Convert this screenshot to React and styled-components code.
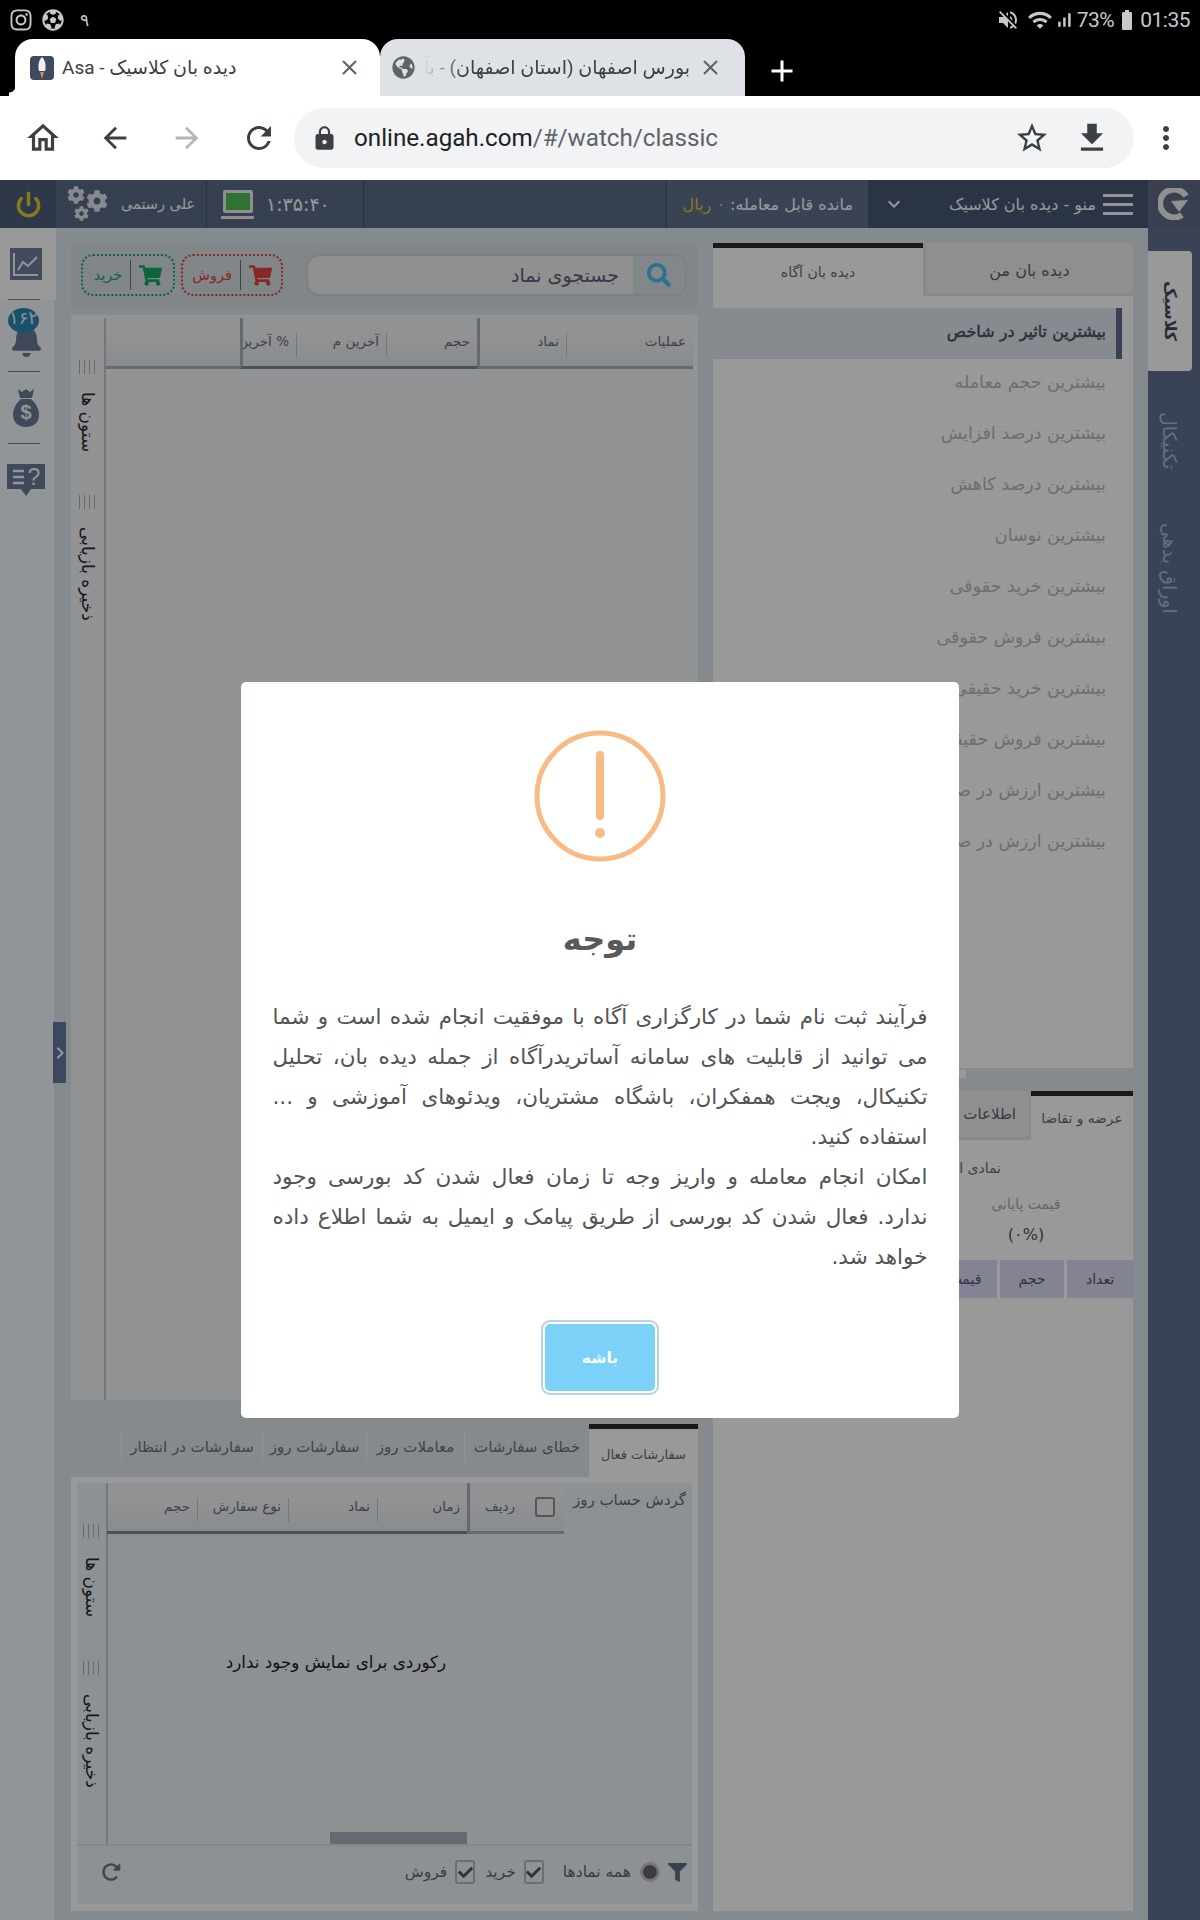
import React from 'react';
import styled, { createGlobalStyle } from 'styled-components';
import { FaInstagram, FaFutbol, FaGlobeAmericas, FaShoppingCart, FaSearch, FaCog, FaFilter, FaBell, FaCheck } from 'react-icons/fa';
import { FaRotateRight } from 'react-icons/fa6';
import {
  MdVolumeOff, MdWifi, MdSignalCellularAlt, MdBatteryFull, MdOutlineHome, MdArrowBack, MdArrowForward,
  MdRefresh, MdLock, MdStarBorder, MdFileDownload, MdMoreVert, MdAdd, MdClose, MdKeyboardArrowDown, MdChevronRight,
} from 'react-icons/md';
import { Power } from 'lucide-react';

const Global = createGlobalStyle`
  html, body { margin: 0; padding: 0; background: #000; overflow: hidden; }
  * { box-sizing: border-box; }
  body { font-family: "DejaVu Sans", sans-serif; }
`;

const Page = styled.div`
  width: 1200px;
  height: 1920px;
  display: flex;
  flex-direction: column;
`;

/* ---------- android status bar ---------- */
const StatusBar = styled.div`
  height: 39px;
  background: #000;
  color: #c8c8c8;
  display: flex;
  align-items: center;
  padding: 0 10px 0 9px;
  font-family: Roboto, "DejaVu Sans", sans-serif;
  font-size: 21px;
`;
const StatusGroup = styled.div`
  display: flex;
  align-items: center;
  gap: ${p => p.$gap || 4}px;
  margin-left: ${p => (p.$end ? 'auto' : 0)};
`;
const Narrow = styled.span`
  letter-spacing: -0.5px;
  margin-left: ${p => p.$ml || 0}px;
`;
const Notif = styled.span`
  font-size: 17px;
  margin-left: 7px;
`;
const WifiIcon = styled(MdWifi)`
  margin-left: 6px;
`;

/* ---------- browser tabs ---------- */
const TabStrip = styled.div`
  height: 57px;
  background: #000;
  display: flex;
  align-items: stretch;
  padding-left: 15px;
`;
const BrowserTab = styled.div`
  position: relative;
  width: ${p => p.$w}px;
  background: ${p => (p.$active ? '#fff' : '#dee1e6')};
  border-radius: 18px 18px 0 0;
  display: flex;
  align-items: center;
  padding: 0 ${p => (p.$active ? 18 : 22)}px 0 ${p => p.$pad}px;
  gap: 8px;
  color: #3c4043;
  font-family: Roboto, "DejaVu Sans", sans-serif;
  font-size: 19px;
  &::before {
    content: '';
    position: absolute;
    left: -6px;
    bottom: 0;
    width: 6px;
    height: 10px;
    display: ${p => (p.$active ? 'block' : 'none')};
    background: radial-gradient(circle at 0 0, transparent 6px, #fff 7px);
  }
`;
const Favicon = styled.div`
  width: 24px;
  height: 24px;
  border-radius: 4px;
  background: #3d4a5f;
  flex: none;
  display: flex;
  align-items: center;
  justify-content: center;
`;
const TabTitle = styled.div`
  flex: 1;
  overflow: hidden;
  white-space: nowrap;
  text-align: left;
  ${p => p.$fade && 'mask-image: linear-gradient(to right, transparent 0, #000 40px);'}
`;
const GlobeIcon = styled(FaGlobeAmericas)`
  flex: none;
`;
const NewTab = styled.div`
  color: #fff;
  display: flex;
  align-items: center;
  margin-left: 19px;
  padding-top: 6px;
`;

/* ---------- browser toolbar ---------- */
const Toolbar = styled.div`
  height: 84px;
  background: #fff;
  display: flex;
  align-items: center;
  padding-left: 7px;
`;
const ToolBtn = styled.div`
  width: ${p => p.$w || 72}px;
  display: flex;
  align-items: center;
  justify-content: center;
  color: ${p => (p.$muted ? '#b4b6b9' : '#3c4043')};
  flex: none;
`;
const UrlPill = styled.div`
  width: 840px;
  height: 60px;
  margin-left: -1px;
  border-radius: 30px;
  background: #f1f3f4;
  display: flex;
  align-items: center;
  padding: 0 12px 0 17px;
  flex: none;
`;
const UrlText = styled.div`
  margin-left: 16px;
  font-family: Roboto, sans-serif;
  font-size: 24.2px;
  color: #202124;
  flex: 1;
  span { color: #5f6368; }
`;

/* ---------- trading app shell ---------- */
const AppArea = styled.div`
  position: relative;
  height: 1740px;
  display: flex;
  flex-direction: column;
  background: #dee6ed;
  overflow: hidden;
`;
const Header = styled.div`
  height: 48px;
  display: flex;
  color: #fff;
  flex: none;
`;
const HeadSeg = styled.div`
  width: ${p => p.$w}px;
  background: ${p => p.$bg || '#5c6c86'};
  border-right: ${p => (p.$line ? '1px solid #46536b' : '0')};
  display: flex;
  align-items: center;
  flex: none;
  gap: ${p => p.$gap || 0}px;
  padding: ${p => p.$pad || '0'};
  justify-content: ${p => p.$justify || 'flex-start'};
  font-size: ${p => p.$size || 14.5}px;
  white-space: nowrap;
`;
const PushEnd = styled.span`
  margin-left: auto;
`;
const ScreenWrap = styled.div`
  width: 33px;
  display: flex;
  flex-direction: column;
  align-items: center;
  gap: 3px;
  flex: none;
`;
const Screen = styled.div`
  width: 30px;
  height: 23px;
  background: #4fc055;
  border: 3px solid #eee;
  border-radius: 2px;
`;
const ScreenBar = styled.div`
  width: 33px;
  height: 3px;
  background: #eee;
`;
const Clock = styled.span`
  font-size: 19px;
  letter-spacing: 0.3px;
`;
const Gold = styled.span`
  color: #e0cc33;
`;
const Burger = styled.div`
  width: 30px;
  height: 21px;
  border-top: 3px solid #f5f5f5;
  border-bottom: 3px solid #f5f5f5;
  position: relative;
  flex: none;
  &::after {
    content: '';
    position: absolute;
    left: 0;
    right: 0;
    top: 6px;
    height: 3px;
    background: #f5f5f5;
  }
`;
const Body = styled.div`
  flex: 1;
  display: flex;
  min-height: 0;
`;

/* left icon rail */
const LeftRail = styled.div`
  width: 56px;
  background: #f3f8fd;
  border-right: 2px solid #dee6ed;
  display: flex;
  flex-direction: column;
  flex: none;
`;
const RailItem = styled.div`
  height: 72px;
  position: relative;
  display: flex;
  align-items: center;
  justify-content: center;
  padding-right: ${p => (p.$active ? 5 : 2)}px;
  margin-right: ${p => (p.$active ? '-2px' : 0)};
  background: ${p => (p.$active ? '#fff' : 'transparent')};
  color: #6b7a96;
  &:not(:last-child)::after {
    content: '';
    position: absolute;
    left: 8px;
    width: 32px;
    bottom: 0;
    height: 1px;
    background: #7d8288;
  }
`;
const BellIcon = styled(FaBell)`
  margin-top: 8px;
`;
const Badge = styled.div`
  position: absolute;
  left: 8px;
  top: 8px;
  width: 31px;
  height: 25px;
  border-radius: 50%;
  background: #2b88b5;
  color: #e8eef5;
  font-size: 18px;
  line-height: 20px;
  text-align: center;
`;
const Collapse = styled.div`
  position: absolute;
  left: 53px;
  top: 842px;
  width: 13px;
  height: 61px;
  background: #64799f;
  color: #fff;
  display: flex;
  align-items: center;
  justify-content: center;
  svg { flex: none; }
`;

/* right tabs rail */
const RightRail = styled.div`
  width: 52px;
  background: #61718f;
  flex: none;
  padding-top: 23px;
  display: flex;
  flex-direction: column;
`;
const RailTab = styled.div`
  height: ${p => p.$h}px;
  width: 44px;
  writing-mode: vertical-rl;
  direction: rtl;
  display: flex;
  align-items: center;
  justify-content: center;
  font-size: ${p => (p.$active ? 16 : 19)}px;
  color: ${p => (p.$active ? '#3f4a63' : '#a4b8dc')};
  background: ${p => (p.$active ? '#fff' : 'transparent')};
  border-radius: ${p => (p.$active ? '0 4px 4px 0' : 0)};
  font-weight: ${p => (p.$active ? 700 : 400)};
  white-space: nowrap;
`;

/* main columns */
const Main = styled.div`
  flex: 1;
  display: flex;
  gap: 15px;
  padding: 15px 15px 9px 15px;
  min-width: 0;
`;
const LeftCol = styled.div`
  width: 627px;
  display: flex;
  flex-direction: column;
  flex: none;
`;
const RightCol = styled.div`
  width: 420px;
  display: flex;
  flex-direction: column;
  flex: none;
`;

/* search strip */
const SearchStrip = styled.div`
  height: 64px;
  background: #d8dfe5;
  display: flex;
  align-items: center;
  padding: 0 11px 0 10px;
  flex: none;
`;
const DashedBtn = styled.div`
  width: ${p => p.$w}px;
  height: 42px;
  margin-left: ${p => p.$ml || 0}px;
  border: 2px dotted ${p => p.$color};
  border-radius: 12px;
  color: ${p => p.$color};
  display: flex;
  direction: rtl;
  align-items: center;
  justify-content: center;
  gap: 8px;
  font-size: 14.5px;
  flex: none;
`;
const BtnRule = styled.span`
  width: 1px;
  height: 30px;
  background: #6c7075;
`;
const SearchBox = styled.div`
  margin-left: auto;
  width: 381px;
  height: 42px;
  border-radius: 14px;
  background: #f0f0f0;
  border: 2px solid #cfd5db;
  display: flex;
  direction: rtl;
  overflow: hidden;
`;
const SearchIcon = styled.div`
  width: 52px;
  background: #d8e1e8;
  color: #4bbcec;
  display: flex;
  align-items: center;
  justify-content: center;
  flex: none;
`;
const SearchLabel = styled.div`
  font-size: 19px;
  color: #566078;
  padding-right: 14px;
  line-height: 38px;
  white-space: nowrap;
`;

/* grids */
const GridPanel = styled.div`
  height: 1085px;
  margin-top: 8px;
  background: #f2f5f8;
  padding: 3px 5px 0 0;
  display: flex;
  flex: none;
`;
const SideTools = styled.div`
  width: ${p => p.$w}px;
  padding-top: ${p => p.$top}px;
  border-right: 2px solid #c2c6cb;
  flex: none;
`;
const SideCell = styled.div`
  height: ${p => p.$h}px;
  display: flex;
  flex-direction: column;
  align-items: center;
  gap: ${p => p.$gap}px;
`;
const Grip = styled.div`
  width: 17px;
  height: 14px;
  background: repeating-linear-gradient(to right, #aeb2b6 0 1px, transparent 1px 5px);
  flex: none;
`;
const SideLabel = styled.div`
  writing-mode: vertical-rl;
  direction: rtl;
  font-size: 17px;
  color: #2a2a2a;
  white-space: nowrap;
`;
const GridArea = styled.div`
  flex: 1;
  min-width: 0;
  display: flex;
  flex-direction: column;
`;
const GridHead = styled.div`
  height: ${p => p.$h}px;
  display: flex;
  direction: rtl;
  background: linear-gradient(#f0f3f6 40%, #e4e8ec);
  border-bottom: 3px solid #aab0b8;
  flex: none;
`;
const HeadCell = styled.div`
  width: ${p => p.$w}px;
  flex: ${p => (p.$w ? 'none' : 1)};
  position: relative;
  padding: 15px 7px 0 0;
  font-size: 13.5px;
  color: #6a6e74;
  white-space: nowrap;
  overflow: hidden;
  text-align: right;
  border-left: ${p => (p.$frozen ? '3px solid #aab0b8' : '0')};
  border-bottom: ${p => (p.$dark ? '3px solid #7b8597' : '0')};
  margin-bottom: ${p => (p.$dark ? '-3px' : 0)};
  &::after {
    content: '';
    display: ${p => (p.$frozen || !p.$w ? 'none' : 'block')};
    position: absolute;
    left: 0;
    top: 15px;
    width: 1px;
    height: 24px;
    background: #c4c8cc;
  }
`;
const RowLabel = styled.span`
  margin-right: 42px;
`;
const HeadCheck = styled.div`
  position: absolute;
  right: 9px;
  top: 14px;
  width: 20px;
  height: 20px;
  border: 2px solid #8d9196;
  border-radius: 3px;
  background: #f4f6f8;
`;

/* bottom order tabs */
const OrderTabs = styled.div`
  height: 53px;
  margin-top: 24px;
  display: flex;
  flex-direction: row-reverse;
  flex: none;
`;
const OrderTab = styled.div`
  width: ${p => p.$w}px;
  flex: none;
  font-size: 15px;
  display: flex;
  align-items: center;
  justify-content: center;
  height: 30px;
  margin-top: 8px;
  border-left: 1px solid #f4f6f8;
  white-space: nowrap;
  color: #6a7078;
  direction: rtl;
`;
const OrderActive = styled.div`
  width: 109px;
  flex: none;
  background: #fff;
  border-top: 5px solid #2b2b2b;
  font-size: 13px;
  color: #666c78;
  display: flex;
  align-items: center;
  justify-content: center;
  direction: rtl;
  padding-top: 2px;
  white-space: nowrap;
`;
const OrdersCard = styled.div`
  flex: 1;
  background: #fff;
  padding: 6px 6px 7px;
  display: flex;
  min-height: 0;
`;
const OrdersInner = styled.div`
  flex: 1;
  background: #edf2f5;
  display: flex;
  flex-direction: column;
  min-width: 0;
`;
const OrdersTop = styled.div`
  flex: 1;
  display: flex;
  min-height: 0;
`;
const TitleCol = styled.div`
  width: 128px;
  flex: none;
  direction: rtl;
  padding: 8px 6px 0 0;
  font-size: 15px;
  color: #666c78;
  white-space: nowrap;
`;
const EmptyMsg = styled.div`
  flex: 1;
  direction: rtl;
  text-align: center;
  padding-top: 116px;
  font-size: 16.8px;
  line-height: 24px;
  color: #1c1c1c;
`;
const ScrollTrack = styled.div`
  height: 12px;
  padding-left: 222px;
  flex: none;
`;
const ScrollThumb = styled.div`
  width: 137px;
  height: 12px;
  background: #a9b0bc;
`;
const OrdersFoot = styled.div`
  height: 60px;
  border-top: 2px solid #dde2e6;
  display: flex;
  direction: rtl;
  align-items: center;
  padding: 0 5px 6px 24px;
  flex: none;
  color: #666;
  font-size: 15.5px;
  white-space: nowrap;
`;
const FootLabel = styled.span`
  margin-right: ${p => p.$gap || 0}px;
`;
const Radio = styled.div`
  width: 20px;
  height: 20px;
  border-radius: 50%;
  background: #666;
  border: 3px solid #c3c6c9;
  margin-right: 8px;
  flex: none;
`;
const Check = styled.div`
  width: 20px;
  height: 24px;
  border: 2px solid #b4b8bc;
  border-radius: 3px;
  background: #f0f2f4;
  margin-right: ${p => p.$mr}px;
  display: flex;
  align-items: center;
  justify-content: center;
  color: #555;
  flex: none;
`;
const RefreshIcon = styled.div`
  margin-right: auto;
  color: #777;
  display: flex;
`;

/* watch list */
const WatchPanel = styled.div`
  height: 825px;
  background: #fff;
  flex: none;
`;
const WatchTabs = styled.div`
  height: 65px;
  display: flex;
`;
const WatchActive = styled.div`
  width: 210px;
  border-top: 5px solid #2b2b2b;
  display: flex;
  justify-content: center;
  padding-top: 16px;
  font-size: 14px;
  color: #666c78;
`;
const WatchInactive = styled.div`
  width: 210px;
  height: 53px;
  background: #eee;
  border-left: 3px solid #dee6ed;
  border-bottom: 3px solid #dee6ed;
  display: flex;
  align-items: center;
  justify-content: center;
  padding-top: 4px;
  font-size: 16px;
  color: #5b6270;
`;
const WatchList = styled.div`
  margin-right: 11px;
  direction: rtl;
`;
const WatchItem = styled.div`
  height: 51px;
  display: flex;
  align-items: center;
  padding: 0 10px 5px 0;
  white-space: nowrap;
  font-size: ${p => (p.$active ? 16 : 17.5)}px;
  border-right: 6px solid ${p => (p.$active ? '#5c6c8e' : 'transparent')};
  background: ${p => (p.$active ? '#e1e8ef' : 'transparent')};
  color: ${p => (p.$active ? '#4a5268' : '#b8b8b8')};
  -webkit-text-stroke: ${p => (p.$active ? '0.5px #4a5268' : '0')};
`;
const Splitter = styled.div`
  height: 23px;
  position: relative;
  flex: none;
`;
const SplitHandle = styled.div`
  position: absolute;
  left: 237px;
  top: 2px;
  width: 16px;
  height: 8px;
  background: #fff;
`;

/* quote panel */
const QuotePanel = styled.div`
  flex: 1;
  background: #fff;
  display: flex;
  flex-direction: column;
  direction: rtl;
`;
const QuoteTabs = styled.div`
  height: 49px;
  display: flex;
  flex: none;
`;
const QuoteActive = styled.div`
  width: 102px;
  border-top: 5px solid #2b2b2b;
  display: flex;
  align-items: center;
  justify-content: center;
  font-size: 13.8px;
  color: #666c78;
  white-space: nowrap;
`;
const QuoteInactive = styled.div`
  width: 90px;
  background: #eee;
  border-right: 2px solid #dee6ed;
  border-bottom: 3px solid #dee6ed;
  display: flex;
  align-items: center;
  padding-right: 13px;
  font-size: 15px;
  color: #5b6270;
`;
const QuoteName = styled.div`
  padding: 20px 132px 0 0;
  font-size: 14px;
  color: #666c78;
  height: 50px;
  white-space: nowrap;
`;
const QuotePrice = styled.div`
  width: 214px;
  text-align: center;
  font-size: ${p => (p.$big ? 16 : 14)}px;
  color: ${p => (p.$big ? '#555' : '#aaa')};
  line-height: 28px;
  margin-top: ${p => (p.$big ? 3 : 0)}px;
`;
const QuoteHead = styled.div`
  margin-top: 11px;
  display: flex;
  gap: 3px;
`;
const QuoteCell = styled.div`
  width: ${p => p.$w}px;
  height: 38px;
  background: #dadbf7;
  display: flex;
  align-items: center;
  justify-content: center;
  font-size: 14px;
  color: #50556e;
  flex: none;
`;

/* sweet alert */
const Overlay = styled.div`
  position: absolute;
  inset: 0;
  background: rgba(0, 0, 0, 0.4);
  display: flex;
  align-items: center;
  justify-content: center;
  z-index: 5;
`;
const Dialog = styled.div`
  width: 718px;
  height: 736px;
  background: #fff;
  border-radius: 5px;
  padding-top: 48px;
  display: flex;
  flex-direction: column;
  align-items: center;
`;
const DialogTitle = styled.h2`
  margin: 57px 0 38px;
  height: 40px;
  line-height: 40px;
  font-size: 32px;
  font-weight: 700;
  color: #595959;
`;
const DialogText = styled.div`
  width: 655px;
  direction: rtl;
  font-size: 21.5px;
  color: #545454;
`;
const TextLine = styled.div`
  height: 40px;
  line-height: 40px;
  white-space: ${p => (p.$full ? 'normal' : 'nowrap')};
  text-align: ${p => (p.$full ? 'justify' : 'right')};
  text-align-last: ${p => (p.$full ? 'justify' : 'right')};
`;
const OkButton = styled.button`
  margin-top: 47px;
  width: 110px;
  height: 67px;
  border: 0;
  border-radius: 5px;
  background: #7cd1f9;
  color: #fff;
  font-family: inherit;
  font-size: 15.5px;
  font-weight: 700;
  box-shadow: 0 0 0 2px #fff, 0 0 0 4px rgba(60, 120, 170, 0.35);
`;

const Logo = () => (
  <svg width="32" height="32" viewBox="0 0 32 32">
    <path d="M28 8 A14 14 0 1 0 24 27" fill="none" stroke="#f0f0f0" strokeWidth="6" />
    <path d="M13 13 L30 12 L21 24 Z" fill="#f0f0f0" />
  </svg>
);
const Gears = () => (
  <svg width="42" height="36" viewBox="0 0 42 36" color="#dfe6ee">
    <FaCog x="0" y="0" size={18} />
    <FaCog x="19" y="4" size={22} />
    <FaCog x="7" y="20" size={15} />
  </svg>
);
const ChartIcon = () => (
  <svg width="32" height="32" viewBox="0 0 32 32">
    <rect width="32" height="32" fill="#6f7f9c" />
    <path d="M4 5 V27 H28" fill="none" stroke="#f3f8fd" strokeWidth="2" />
    <path d="M8 22 L13 14 L18 18 L27 9" fill="none" stroke="#f3f8fd" strokeWidth="2" />
  </svg>
);
const MoneyBag = () => (
  <svg width="28" height="38" viewBox="0 0 28 38">
    <path d="M6 0 L10 3 L14 0 L18 3 L22 0 L20 9 H8 Z" fill="#6b7a96" />
    <path d="M9 10 H19 C25 15 27 21 27 26 C27 34 21 38 14 38 C7 38 1 34 1 26 C1 21 3 15 9 10 Z" fill="#6b7a96" />
    <text x="14" y="30" textAnchor="middle" fontSize="20" fontWeight="700" fontFamily="Liberation Sans" fill="#f3f8fd">$</text>
  </svg>
);
const HelpIcon = () => (
  <svg width="38" height="32" viewBox="0 0 38 32">
    <path d="M0 0 H38 V25 H24 L19 32 L14 25 H0 Z" fill="#6b7a96" />
    <path d="M6 7 H17 M6 13 H17 M6 19 H17" stroke="#f3f8fd" strokeWidth="2.5" />
    <text x="27" y="21" textAnchor="middle" fontSize="23" fontFamily="Liberation Sans" fill="#f3f8fd">?</text>
  </svg>
);
const Rocket = () => (
  <svg width="14" height="22" viewBox="0 0 14 22">
    <path d="M7 0 C11 4 11 10 10 14 H4 C3 10 3 4 7 0 Z" fill="#f2f2f2" />
    <path d="M5 15 H9 L7 22 Z" fill="#e8873a" />
  </svg>
);
const AlertIcon = () => (
  <svg width="132" height="132" viewBox="0 0 132 132">
    <circle cx="66" cy="66" r="63" fill="none" stroke="#f8bb86" strokeWidth="5" />
    <rect x="62" y="21" width="8" height="69" rx="4" fill="#f8bb86" />
    <circle cx="66" cy="103" r="5" fill="#f8bb86" />
  </svg>
);

const watchItems = [
  'بیشترین حجم معامله', 'بیشترین درصد افزایش', 'بیشترین درصد کاهش', 'بیشترین نوسان', 'بیشترین خرید حقوقی',
  'بیشترین فروش حقوقی', 'بیشترین خرید حقیقی', 'بیشترین فروش حقیقی', 'بیشترین ارزش در صف خرید', 'بیشترین ارزش در صف فروش',
];

const dialogLines = [
  ['فرآیند ثبت نام شما در کارگزاری آگاه با موفقیت انجام شده است و شما', true],
  ['می توانید از قابلیت های سامانه آساتریدرآگاه از جمله دیده بان، تحلیل', true],
  ['تکنیکال، ویجت همفکران، باشگاه مشتریان، ویدئوهای آموزشی و ...', true],
  ['استفاده کنید.', false],
  ['امکان انجام معامله و واریز وجه تا زمان فعال شدن کد بورسی وجود', true],
  ['ندارد. فعال شدن کد بورسی از طریق پیامک و ایمیل به شما اطلاع داده', true],
  ['خواهد شد.', false],
];

function SideColumn({ width, top, height, gap }) {
  return (
    <SideTools $w={width} $top={top}>
      <SideCell $h={height} $gap={gap}>
        <Grip />
        <SideLabel>ستون ها</SideLabel>
      </SideCell>
      <SideCell $h={height} $gap={gap}>
        <Grip />
        <SideLabel>ذخیره بازیابی</SideLabel>
      </SideCell>
    </SideTools>
  );
}

export default function App() {
  return (
    <Page>
      <Global />
      <StatusBar>
        <StatusGroup $gap={9}>
          <FaInstagram size={24} />
          <FaFutbol size={22} />
          <Notif>۹</Notif>
        </StatusGroup>
        <StatusGroup $end $gap={1}>
          <MdVolumeOff size={24} />
          <WifiIcon size={26} />
          <MdSignalCellularAlt size={20} />
          <Narrow $ml={2}>73%</Narrow>
          <MdBatteryFull size={24} />
          <Narrow>01:35</Narrow>
        </StatusGroup>
      </StatusBar>

      <TabStrip>
        <BrowserTab $active $w={365} $pad={15}>
          <Favicon><Rocket /></Favicon>
          <TabTitle>Asa - دیده بان کلاسیک</TabTitle>
          <MdClose size={25} color="#5f6368" />
        </BrowserTab>
        <BrowserTab $w={365} $pad={12}>
          <GlobeIcon size={23} color="#5f6368" />
          <TabTitle $fade dir="rtl">بورس اصفهان (استان اصفهان) - بآهنگ</TabTitle>
          <MdClose size={25} color="#5f6368" />
        </BrowserTab>
        <NewTab><MdAdd size={36} /></NewTab>
      </TabStrip>

      <Toolbar>
        <ToolBtn><MdOutlineHome size={38} /></ToolBtn>
        <ToolBtn><MdArrowBack size={34} /></ToolBtn>
        <ToolBtn $muted><MdArrowForward size={34} /></ToolBtn>
        <ToolBtn><MdRefresh size={36} /></ToolBtn>
        <UrlPill>
          <MdLock size={27} color="#3c4043" />
          <UrlText>online.agah.com<span>/#/watch/classic</span></UrlText>
          <ToolBtn $w={60}><MdStarBorder size={36} /></ToolBtn>
          <ToolBtn $w={60}><MdFileDownload size={38} /></ToolBtn>
        </UrlPill>
        <ToolBtn $w={64}><MdMoreVert size={36} /></ToolBtn>
      </Toolbar>

      <AppArea>
        <Header>
          <HeadSeg $w={56} $bg="#4f5e78" $justify="center">
            <Power size={27} strokeWidth={3} color="#e0cc33" />
          </HeadSeg>
          <HeadSeg $w={151} $line $gap={12} $pad="0 0 0 11px">
            <Gears />
            <span dir="rtl">علی رستمی</span>
          </HeadSeg>
          <HeadSeg $w={157} $line $gap={12} $pad="0 0 0 14px">
            <ScreenWrap>
              <Screen />
              <ScreenBar />
            </ScreenWrap>
            <Clock>۱:۳۵:۴۰</Clock>
          </HeadSeg>
          <HeadSeg $w={303} $line />
          <HeadSeg $w={201} $bg="#61718c" $justify="flex-end" $pad="0 15px 0 0" $size={16}>
            <span dir="rtl">مانده قابل معامله: <Gold>۰ ریال</Gold></span>
          </HeadSeg>
          <HeadSeg $w={280} $bg="#495873" $pad="0 15px 0 14px" $gap={7} $size={16}>
            <MdKeyboardArrowDown size={24} />
            <PushEnd dir="rtl">منو - دیده بان کلاسیک</PushEnd>
            <Burger />
          </HeadSeg>
          <HeadSeg $w={52} $bg="#5f6d85" $justify="center"><Logo /></HeadSeg>
        </Header>

        <Body>
          <LeftRail>
            <RailItem $active><ChartIcon /></RailItem>
            <RailItem>
              <BellIcon size={33} />
              <Badge>۱۶۲</Badge>
            </RailItem>
            <RailItem><MoneyBag /></RailItem>
            <RailItem><HelpIcon /></RailItem>
          </LeftRail>

          <Main>
            <LeftCol>
              <SearchStrip>
                <DashedBtn $w={94} $color="#17a96c">
                  <FaShoppingCart size={23} />
                  <BtnRule />
                  خرید
                </DashedBtn>
                <DashedBtn $w={102} $ml={6} $color="#e5423f">
                  <FaShoppingCart size={23} />
                  <BtnRule />
                  فروش
                </DashedBtn>
                <SearchBox>
                  <SearchIcon><FaSearch size={24} /></SearchIcon>
                  <SearchLabel>جستجوی نماد</SearchLabel>
                </SearchBox>
              </SearchStrip>

              <GridPanel>
                <SideColumn width={35} top={42} height={135} gap={18} />
                <GridArea>
                  <GridHead $h={51}>
                    <HeadCell $w={127}>عملیات</HeadCell>
                    <HeadCell $w={89} $frozen>نماد</HeadCell>
                    <HeadCell $w={91} $dark>حجم</HeadCell>
                    <HeadCell $w={90} $dark>آخرین م</HeadCell>
                    <HeadCell $w={56} $frozen $dark>% آخرین</HeadCell>
                    <HeadCell />
                  </GridHead>
                </GridArea>
              </GridPanel>

              <OrderTabs>
                <OrderActive>سفارشات فعال</OrderActive>
                <OrderTab $w={125}>خطای سفارشات</OrderTab>
                <OrderTab $w={98}>معاملات روز</OrderTab>
                <OrderTab $w={104}>سفارشات روز</OrderTab>
                <OrderTab $w={141}>سفارشات در انتظار</OrderTab>
              </OrderTabs>

              <OrdersCard>
                <OrdersInner>
                  <OrdersTop>
                    <SideColumn width={31} top={41} height={137} gap={19} />
                    <GridArea>
                      <GridHead $h={51}>
                        <HeadCell $w={97} $frozen>
                          <HeadCheck />
                          <RowLabel>ردیف</RowLabel>
                        </HeadCell>
                        <HeadCell $w={90} $dark>زمان</HeadCell>
                        <HeadCell $w={89} $dark>نماد</HeadCell>
                        <HeadCell $w={91} $dark>نوع سفارش</HeadCell>
                        <HeadCell $w={90} $dark>حجم</HeadCell>
                      </GridHead>
                      <EmptyMsg>رکوردی برای نمایش وجود ندارد</EmptyMsg>
                      <ScrollTrack><ScrollThumb /></ScrollTrack>
                    </GridArea>
                    <TitleCol>گردش حساب روز</TitleCol>
                  </OrdersTop>
                  <OrdersFoot>
                    <FaFilter size={19} color="#5d6d8d" />
                    <Radio />
                    <FootLabel $gap={9}>همه نمادها</FootLabel>
                    <Check $mr={19}><FaCheck size={15} /></Check>
                    <FootLabel $gap={8}>خرید</FootLabel>
                    <Check $mr={10}><FaCheck size={15} /></Check>
                    <FootLabel $gap={8}>فروش</FootLabel>
                    <RefreshIcon><FaRotateRight size={20} /></RefreshIcon>
                  </OrdersFoot>
                </OrdersInner>
              </OrdersCard>
            </LeftCol>

            <RightCol>
              <WatchPanel>
                <WatchTabs>
                  <WatchActive dir="rtl">دیده بان آگاه</WatchActive>
                  <WatchInactive dir="rtl">دیده بان من</WatchInactive>
                </WatchTabs>
                <WatchList>
                  <WatchItem $active>بیشترین تاثیر در شاخص</WatchItem>
                  {watchItems.map(item => <WatchItem key={item}>{item}</WatchItem>)}
                </WatchList>
              </WatchPanel>
              <Splitter><SplitHandle /></Splitter>
              <QuotePanel>
                <QuoteTabs>
                  <QuoteActive>عرضه و تقاضا</QuoteActive>
                  <QuoteInactive>اطلاعات</QuoteInactive>
                </QuoteTabs>
                <QuoteName>نمادی انتخاب نشده</QuoteName>
                <QuotePrice>قیمت پایانی</QuotePrice>
                <QuotePrice $big>(۰%)</QuotePrice>
                <QuoteHead>
                  <QuoteCell $w={66}>تعداد</QuoteCell>
                  <QuoteCell $w={64}>حجم</QuoteCell>
                  <QuoteCell $w={64}>قیمت</QuoteCell>
                </QuoteHead>
              </QuotePanel>
            </RightCol>
          </Main>

          <RightRail>
            <RailTab $active $h={120}>کلاسیک</RailTab>
            <RailTab $h={140}>تکنیکال</RailTab>
            <RailTab $h={114}>اوراق بدهی</RailTab>
          </RightRail>
        </Body>

        <Collapse><MdChevronRight size={24} /></Collapse>

        <Overlay>
          <Dialog>
            <AlertIcon />
            <DialogTitle>توجه</DialogTitle>
            <DialogText>
              {dialogLines.map(([text, full]) => <TextLine key={text} $full={full}>{text}</TextLine>)}
            </DialogText>
            <OkButton>باشه</OkButton>
          </Dialog>
        </Overlay>
      </AppArea>
    </Page>
  );
}
